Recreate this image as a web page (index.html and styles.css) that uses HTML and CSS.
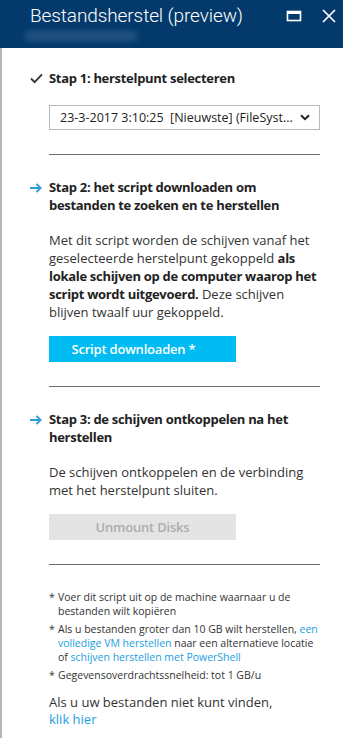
FILE: index.html
```html
<!DOCTYPE html>
<html lang="nl">
<head>
<meta charset="utf-8">
<title>Bestandsherstel (preview)</title>
<link rel="stylesheet" href="styles.css">
</head>
<body>
<div class="blade">
  <header class="blade-header">
    <div class="titles">
      <h1 class="title">Bestandsherstel (preview)</h1>
      <div class="subtitle-blur"></div>
    </div>
    <div class="controls">
      <svg class="ctl" width="16" height="16" viewBox="0 0 16 16" aria-hidden="true">
        <rect x="1.5" y="3.5" width="13" height="9" fill="none" stroke="#fff" stroke-width="1.6"/>
        <rect x="1.5" y="3" width="13" height="3" fill="#fff"/>
      </svg>
      <svg class="ctl" width="16" height="16" viewBox="0 0 16 16" aria-hidden="true">
        <path d="M2 2 L14 14 M14 2 L2 14" stroke="#fff" stroke-width="1.7" fill="none"/>
      </svg>
    </div>
  </header>
  <main class="content">
    <section class="step step-first">
      <div class="step-head">
        <svg class="step-icon" width="13" height="11" viewBox="0 0 13 11" aria-hidden="true">
          <path d="M1 5.5 L4.6 9.2 L12 1.4" fill="none" stroke="#333" stroke-width="1.8"/>
        </svg>
        <h2 class="step-title">Stap 1: herstelpunt selecteren</h2>
      </div>
      <div class="step-body">
        <div class="select">
          <span class="select-text">23-3-2017 3:10:25&nbsp; [Nieuwste] (FileSyst...</span>
          <svg class="chev" width="10" height="7" viewBox="0 0 10 7" aria-hidden="true">
            <path d="M1 1.2 L5 5.2 L9 1.2" fill="none" stroke="#222" stroke-width="2"/>
          </svg>
        </div>
      </div>
    </section>
    <hr class="divider">
    <section class="step">
      <div class="step-head">
        <svg class="step-icon arrow" width="12" height="10" viewBox="0 0 12 10" aria-hidden="true">
          <path d="M0 5 H10.5 M6.5 1 L10.8 5 L6.5 9" fill="none" stroke="#2b9fd8" stroke-width="1.8"/>
        </svg>
        <h2 class="step-title">Stap 2: het script downloaden om bestanden te zoeken en te herstellen</h2>
      </div>
      <div class="step-body">
        <p class="text">Met dit script worden de schijven vanaf het geselecteerde herstelpunt gekoppeld <b>als lokale schijven op de computer waarop het script wordt uitgevoerd.</b> Deze schijven blijven twaalf uur gekoppeld.</p>
        <button class="btn btn-primary" type="button">Script downloaden *</button>
      </div>
    </section>
    <hr class="divider">
    <section class="step">
      <div class="step-head">
        <svg class="step-icon arrow" width="12" height="10" viewBox="0 0 12 10" aria-hidden="true">
          <path d="M0 5 H10.5 M6.5 1 L10.8 5 L6.5 9" fill="none" stroke="#2b9fd8" stroke-width="1.8"/>
        </svg>
        <h2 class="step-title">Stap 3: de schijven ontkoppelen na het herstellen</h2>
      </div>
      <div class="step-body">
        <p class="text">De schijven ontkoppelen en de verbinding met het herstelpunt sluiten.</p>
        <button class="btn btn-disabled" type="button" disabled>Unmount Disks</button>
      </div>
    </section>
    <hr class="divider">
    <div class="step-body notes">
      <ul class="footnotes">
        <li>Voer dit script uit op de machine waarnaar u de bestanden wilt kopiëren</li>
        <li>Als u bestanden groter dan 10 GB wilt herstellen, <a href="#">een volledige VM herstellen</a> naar een alternatieve locatie of <a href="#">schijven herstellen met PowerShell</a></li>
        <li>Gegevensoverdrachtssnelheid: tot 1 GB/u</li>
      </ul>
      <p class="text help">Als u uw bestanden niet kunt vinden,<br><a href="#">klik hier</a></p>
    </div>
  </main>
</div>
</body>
</html>
```

FILE: styles.css
```css
* { box-sizing: border-box; }
html, body {
  margin: 0;
  padding: 0;
  background: #fff;
}
body {
  width: 343px;
  height: 738px;
  overflow: hidden;
  font-family: "Open Sans", "Noto Sans", "Liberation Sans", sans-serif;
  color: #333;
}
.blade {
  display: flex;
  flex-direction: column;
  height: 738px;
}
.blade-header {
  height: 48px;
  flex: none;
  background: #033a6b;
  display: flex;
  justify-content: space-between;
  align-items: flex-start;
  padding: 0 6px 0 30px;
}
.titles {
  display: flex;
  flex-direction: column;
}
.title {
  margin: 3px 0 0 0;
  font-family: Roboto, "Open Sans", sans-serif;
  font-weight: 300;
  font-size: 19px;
  line-height: 26px;
  letter-spacing: -0.1px;
  color: #fff;
  white-space: nowrap;
}
.subtitle-blur {
  margin: 2px 0 0 -5px;
  width: 112px;
  height: 10px;
  background: #2b5a88;
  filter: blur(3px);
  border-radius: 4px;
  opacity: 0.8;
}
.controls {
  display: flex;
  gap: 19px;
  margin-top: 8px;
}
.ctl { display: block; }
.content {
  flex: 1;
  border-left: 2px solid #b5b5b5;
  padding: 21px 23px 0 28px;
}
.step-head {
  display: grid;
  grid-template-columns: 19px 1fr;
  align-items: start;
}
.step-icon {
  margin-top: 4px;
}
.step-icon.arrow { margin-top: 5px; }
.step-title {
  margin: 0;
  font-size: 13px;
  font-weight: 700;
  line-height: 18px;
  color: #222;
  letter-spacing: -0.3px;
}
.step-body {
  padding-left: 19px;
}
.step-first .step-body { padding-top: 18px; }
.select {
  height: 25px;
  border: 1px solid #b9b9b9;
  display: flex;
  align-items: center;
  justify-content: space-between;
  padding: 0 9px 0 10px;
  font-size: 12.5px;
  color: #222;
}
.select-text { white-space: nowrap; }
.chev { display: block; }
.divider {
  margin: 24px 0 23px 19px;
  border: 0;
  border-top: 1px solid #6e6e6e;
  height: 0;
}
.text {
  margin: 17px 0 0 0;
  font-size: 13px;
  line-height: 18px;
  color: #333;
}
.text b {
  color: #222;
  letter-spacing: -0.3px;
}
.btn {
  display: block;
  margin-top: 15px;
  width: 187px;
  height: 26px;
  border: 0;
  font-family: inherit;
  font-size: 13px;
  font-weight: 600;
  padding: 0;
  letter-spacing: -0.2px;
}
.btn-primary {
  background: #00bcf2;
  color: #fff;
  padding-right: 18px;
}
.btn-disabled {
  background: #e4e4e4;
  color: #adadad;
}
.notes { padding-top: 2px; }
.footnotes {
  list-style: none;
  margin: 0;
  padding: 0;
  font-size: 10.5px;
  line-height: 14px;
  color: #333;
}
.footnotes li {
  position: relative;
  padding-left: 9px;
  margin-bottom: 4px;
}
.footnotes li::before {
  content: "*";
  position: absolute;
  left: 0;
  top: 0;
}
a {
  color: #1aa0e0;
  text-decoration: none;
}
.help {
  margin-top: 12px;
  line-height: 17px;
}
```
